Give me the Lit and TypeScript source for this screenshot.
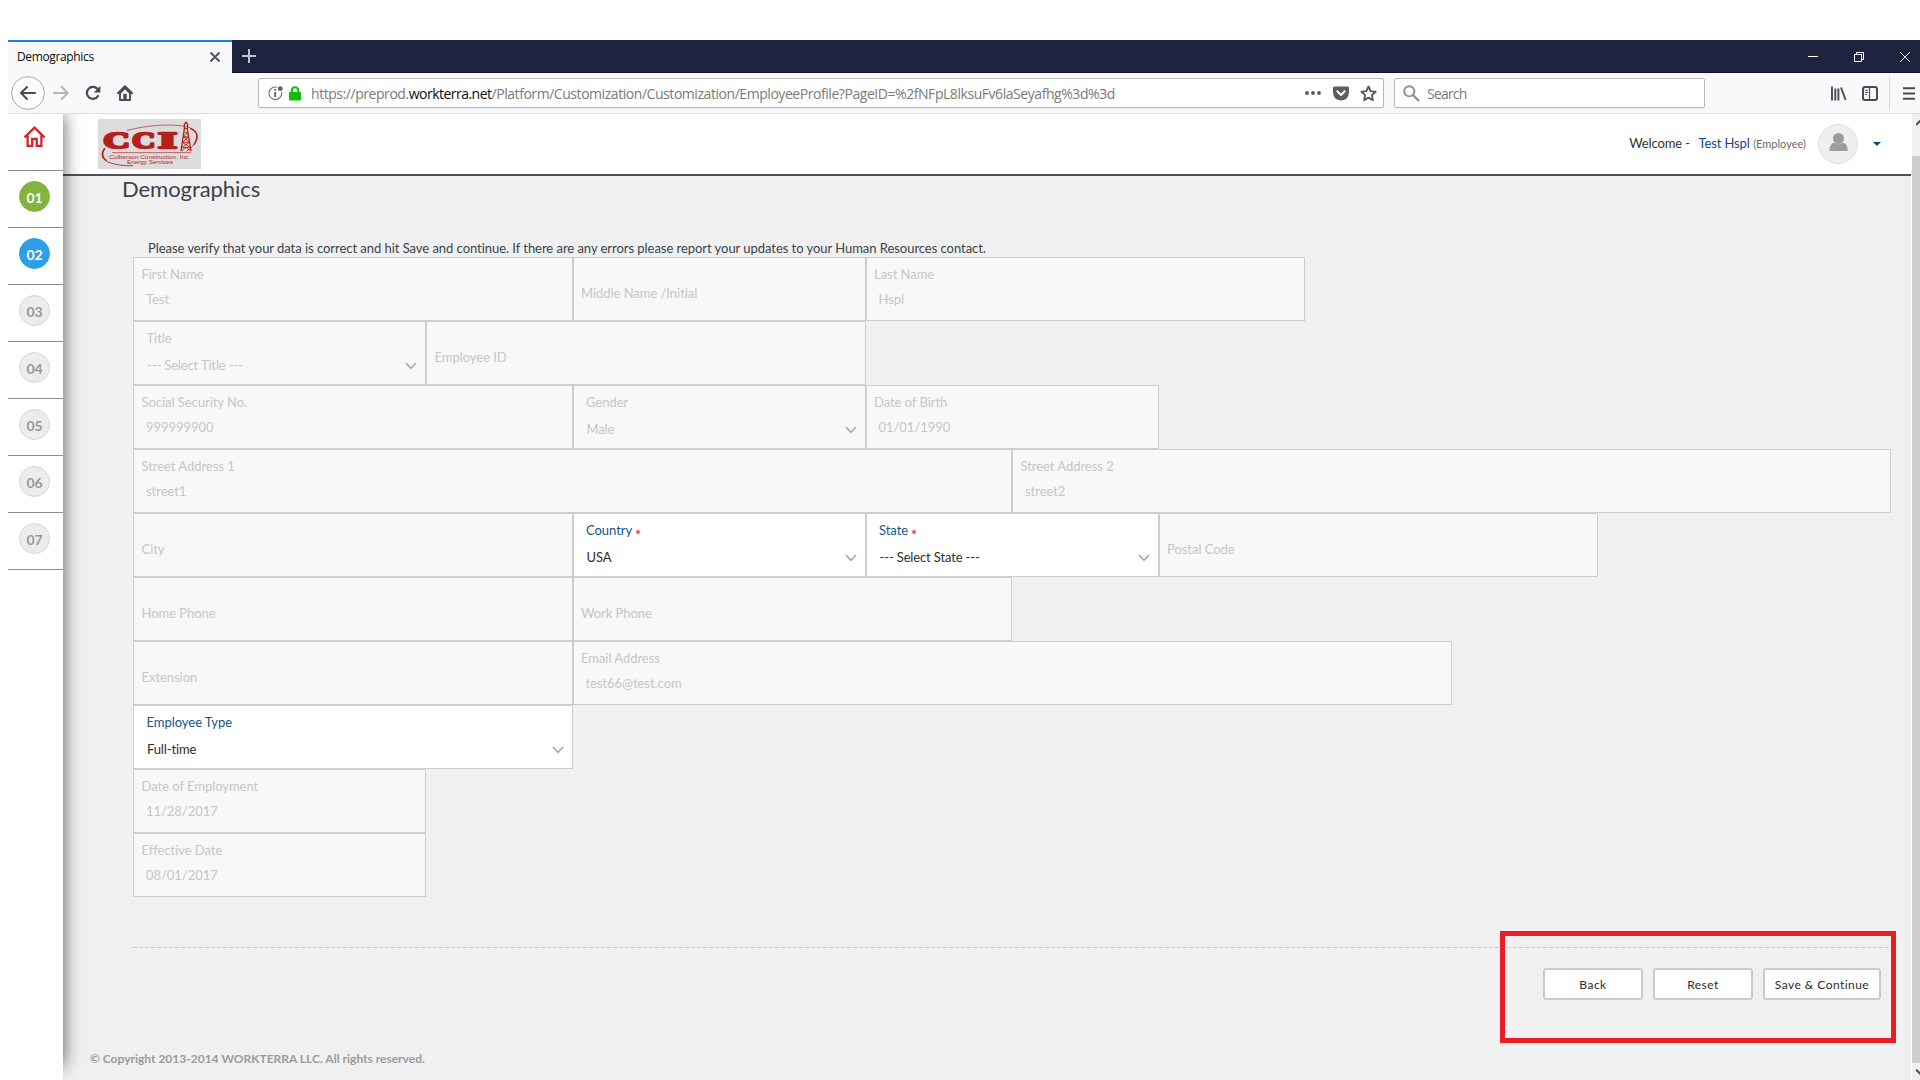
import { LitElement, html, css, nothing } from "lit";
import { customElement, property } from "lit/decorators.js";
import { classMap } from "lit/directives/class-map.js";

interface Field {
  label: string;
  value?: string;
  span: number;
  select?: boolean;
  active?: boolean;
  required?: boolean;
}

const ROWS: Field[][] = [
  [
    { label: "First Name", value: "Test", span: 3 },
    { label: "Middle Name /Initial", span: 2 },
    { label: "Last Name", value: "Hspl", span: 3 },
  ],
  [
    { label: "Title", value: "--- Select Title ---", span: 2, select: true },
    { label: "Employee ID", span: 3 },
  ],
  [
    { label: "Social Security No.", value: "999999900", span: 3 },
    { label: "Gender", value: "Male", span: 2, select: true },
    { label: "Date of Birth", value: "01/01/1990", span: 2 },
  ],
  [
    { label: "Street Address 1", value: "street1", span: 6 },
    { label: "Street Address 2", value: "street2", span: 6 },
  ],
  [
    { label: "City", span: 3 },
    { label: "Country", value: "USA", span: 2, select: true, active: true, required: true },
    { label: "State", value: "--- Select State ---", span: 2, select: true, active: true, required: true },
    { label: "Postal Code", span: 3 },
  ],
  [
    { label: "Home Phone", span: 3 },
    { label: "Work Phone", span: 3 },
  ],
  [
    { label: "Extension", span: 3 },
    { label: "Email Address", value: "test66@test.com", span: 6 },
  ],
  [{ label: "Employee Type", value: "Full-time", span: 3, select: true, active: true }],
  [{ label: "Date of Employment", value: "11/28/2017", span: 2 }],
  [{ label: "Effective Date", value: "08/01/2017", span: 2 }],
];

@customElement("form-field")
class FormField extends LitElement {
  @property({ attribute: false }) field!: Field;

  static styles = css`
    :host { display: block; min-width: 0; }
    .box {
      box-sizing: border-box; height: 64px; border: 1px solid #cdcdcd; background: #f8f8f8;
      color: #c6c6c6; padding: 8px 8px 0 7.5px; font-size: 13px; line-height: 16px;
      letter-spacing: -0.04px; white-space: nowrap;
    }
    .empty { padding-top: 27px; }
    .select { padding-left: 12.5px; }
    .active { background: #fff; color: #2e2e2e; }
    .active .label { color: #14558a; }
    .line { display: flex; justify-content: space-between; padding: 9px 0 0 4.5px; }
    .select .line { padding: 11px 0 0 0.5px; letter-spacing: -0.14px; }
    .chev { width: 12px; height: 8px; margin: 5px 0 0; }
  `;

  render() {
    const f = this.field;
    return html`<div class=${classMap({ box: true, empty: !f.value, select: !!f.select, active: !!f.active })}>
      <div class="label">${f.label}${f.required ? html` <svg width="6" height="6" viewBox="0 0 6 6"><path d="M3 .5V5.5M.8 1.7 5.2 4.3M5.2 1.7 .8 4.3" stroke="#e8262c" stroke-width=".9" /></svg>` : nothing}</div>
      ${f.value
        ? html`<div class="line"><span>${f.value}</span>${f.select
            ? html`<svg class="chev" viewBox="0 0 12 8"><path d="M1 1 6 6.3 11 1" fill="none" stroke="#a6a6a6" stroke-width="1.6" /></svg>`
            : nothing}</div>`
        : nothing}
    </div>`;
  }
}

@customElement("company-logo")
class CompanyLogo extends LitElement {
  static styles = css`
    :host { display: block; width: 103px; height: 50px; }
    svg { display: block; }
    .big { font: bold 72px "Liberation Serif", serif; }
    .small { font: 18px "Liberation Sans", sans-serif; }
  `;
  render() {
    return html`<svg width="103" height="50" viewBox="0 0 309 150">
      <rect width="309" height="150" fill="#dcdcdc" />
      <g fill="none" stroke="#b5201b" stroke-linecap="round">
        <path d="M88 34C150 18 215 14 262 22C300 30 304 54 290 74C283 84 274 92 264 97" stroke-width="2" />
        <path d="M278 29C300 38 302 56 288 76" stroke-width="4.5" />
        <path d="M20 88C8 102 10 120 30 129C52 138 80 141 104 140" stroke-width="2.5" />
        <path d="M19 90C10 102 12 116 24 124" stroke-width="5" />
        <path d="M44 101H278" stroke-width="2" />
      </g>
      <g class="big" fill="#b5201b" stroke="#b5201b" stroke-width="7" stroke-linejoin="round">
        <text x="16" y="87" textLength="80" lengthAdjust="spacingAndGlyphs">C</text>
        <text x="102" y="87" textLength="70" lengthAdjust="spacingAndGlyphs">C</text>
        <text x="180" y="87" textLength="57" lengthAdjust="spacingAndGlyphs">I</text>
      </g>
      <g fill="none" stroke="#b5201b" stroke-width="4">
        <path d="M259 30 249 96M268 30 279 96M257 28H270M259 28V16L264 10 269 16V28" />
        <path d="M259 40H269L256 54H272L253 70H275L251 86H277M269 40 272 54 256 54M256 54 275 70M253 70 277 86M251 96 264 84 278 96" stroke-width="2.6" />
      </g>
      <g class="small" fill="#b5201b">
        <text x="34" y="120" textLength="242" lengthAdjust="spacingAndGlyphs">Culberson Construction, Inc.</text>
        <text x="87" y="136" textLength="138" lengthAdjust="spacingAndGlyphs">Energy Services</text>
      </g>
    </svg>`;
  }
}

@customElement("browser-chrome")
class BrowserChrome extends LitElement {
  static styles = css`
    :host { display: block; font-family: "Open Sans", "Noto Sans", sans-serif; }
    svg { display: block; flex: none; }
    .tabs { display: flex; height: 33px; background: #20233f; }
    .tab {
      box-sizing: border-box; display: flex; align-items: center; justify-content: space-between;
      width: 224px; border-top: 2px solid #1484e6; background: #f9f9fb; padding: 0 11px 2px 9px;
      font-size: 12px; letter-spacing: -0.36px; color: #0c0c0d; line-height: 29px;
    }
    .strip { flex: 1; display: flex; justify-content: space-between; align-items: center; border-bottom: 1px solid #10122a; }
    .plus { margin-left: 10px; }
    .win { display: flex; gap: 36px; margin-right: 10px; align-items: center; margin-top: 1px; }
    .bar {
      box-sizing: border-box; display: flex; align-items: center; height: 41px; background: #f9f9fb;
      border-bottom: 1px solid #dcdcdd; padding-left: 3px;
    }
    .box {
      box-sizing: border-box; display: flex; align-items: center; height: 30px; background: #fff;
      border: 1px solid #b9b9bb; border-radius: 2px; white-space: nowrap; font-size: 14px; color: #7a7a7a;
      box-shadow: 0 1px 2px rgba(0, 0, 0, 0.06);
    }
    .url { width: 1126px; margin-left: 125px; padding: 0 6px 0 9px; }
    .addr { margin-left: 10px; letter-spacing: -0.446px; flex: 1; line-height: 28px; padding-top: 1px; }
    .addr b { font-weight: 400; color: #0c0c0d; letter-spacing: -0.52px; }
    .search { width: 311px; margin-left: 10px; padding-left: 8px; }
    .hint { margin-left: 7px; letter-spacing: -0.8px; padding-top: 1px; }
    .fwd { margin-left: 8px; } .reload { margin-left: 16px; } .home { margin-left: 16px; }
    .lock { margin-left: 6px; } .pocket { margin-left: 12px; } .star { margin-left: 11px; }
    .lib { margin-left: 126px; } .side { margin-left: 15px; }
    .div { width: 1px; height: 34px; background: #dcdcdd; margin-left: 11px; }
    .menu { margin-left: 13px; }
  `;
  render() {
    const s = "#4a4a4f";
    return html`
      <div class="tabs">
        <div class="tab"><span>Demographics</span>
          <svg width="12" height="12" viewBox="0 0 12 12"><path d="M1.5 1.5 10.5 10.5M10.5 1.5 1.5 10.5" stroke="#505055" stroke-width="1.8" /></svg>
        </div>
        <div class="strip">
          <svg class="plus" width="14" height="14" viewBox="0 0 14 14"><path d="M7 0V14M0 7H14" stroke="#c3c3cd" stroke-width="2" /></svg>
          <div class="win">
            <svg width="10" height="10" viewBox="0 0 10 10"><path d="M0 4.5H10" stroke="#fff" /></svg>
            <svg width="10" height="10" viewBox="0 0 10 10"><path d="M.5 2.5H7.5V9.5H.5ZM2.5 2.5V.5H9.5V7.5H7.5" fill="none" stroke="#fff" /></svg>
            <svg width="10" height="10" viewBox="0 0 10 10"><path d="M0 0 10 10M10 0 0 10" stroke="#fff" stroke-width=".9" /></svg>
          </div>
        </div>
      </div>
      <div class="bar">
        <svg width="34" height="34" viewBox="0 0 34 34"><circle cx="17" cy="17" r="16.4" fill="#fdfdfe" stroke="#a9a9ab" /><path d="M24 17H10.5M16 11 10 17 16 23" fill="none" stroke=${s} stroke-width="2" stroke-linecap="round" stroke-linejoin="round" /></svg>
        <svg class="fwd" width="16" height="16" viewBox="0 0 16 16"><path d="M1 8H14M8.5 1.8 14.7 8 8.5 14.2" fill="none" stroke="#b6b6b9" stroke-width="2" stroke-linecap="round" stroke-linejoin="round" /></svg>
        <svg class="reload" width="16" height="16" viewBox="0 0 16 16"><path d="M12.4 3.8A6 6 0 1 0 13 11" fill="none" stroke=${s} stroke-width="2.2" stroke-linecap="round" /><path d="M15.4 .8V7.4H8.8Z" fill=${s} /></svg>
        <svg class="home" width="16" height="16" viewBox="0 0 16 16"><path d="M1 8.2 8 1.2 15 8.2" fill="none" stroke=${s} stroke-width="2" stroke-linecap="round" stroke-linejoin="round" /><path d="M3 7.5V15H13V7.5M3 8 8 3 13 8" fill="none" stroke=${s} stroke-width="1.9" stroke-linejoin="round" /><path d="M6.3 15V8.8H9.7V15" fill=${s} /></svg>
        <div class="box url">
          <svg width="15" height="15" viewBox="0 0 15 15"><path d="M9.3 1.3A6.3 6.3 0 1 0 13.5 6" fill="none" stroke="#737373" stroke-width="1.1" /><path d="M7.2 6V11" stroke="#636363" stroke-width="1.8" /><circle cx="7.2" cy="3.8" r="1.1" fill="#636363" /><circle cx="12.3" cy="2.7" r="2.4" fill="#636363" /></svg>
          <svg class="lock" width="12" height="15" viewBox="0 0 12 15"><path d="M2.8 7V4.4A3.2 3.2 0 0 1 9.2 4.4V7" fill="none" stroke="#12bc00" stroke-width="2.1" /><rect y="6" width="12" height="8.6" rx="1" fill="#12bc00" /></svg>
          <span class="addr">https://preprod.<b>workterra.net</b>/Platform/Customization/Customization/EmployeeProfile?PageID=%2fNFpL8lksuFv6laSeyafhg%3d%3d</span>
          <svg width="16" height="4" viewBox="0 0 16 4"><g fill="#5a5a5c"><circle cx="2" cy="2" r="1.9" /><circle cx="8" cy="2" r="1.9" /><circle cx="14" cy="2" r="1.9" /></g></svg>
          <svg class="pocket" width="16" height="15" viewBox="0 0 16 15"><path d="M1.5 .5H14.5Q16 .5 16 2V6.5A8 8 0 0 1 0 6.5V2Q0 .5 1.5 .5Z" fill="#5d5d60" /><path d="M4.3 5.3 8 9 11.7 5.3" fill="none" stroke="#fff" stroke-width="2" stroke-linecap="round" stroke-linejoin="round" /></svg>
          <svg class="star" width="17" height="17" viewBox="0 0 17 17"><path d="M8.5 1.5 10.6 6.1 15.6 6.7 11.9 10.1 12.9 15.1 8.5 12.6 4.1 15.1 5.1 10.1 1.4 6.7 6.4 6.1Z" fill="none" stroke="#5a5a5c" stroke-width="1.9" stroke-linejoin="round" /></svg>
        </div>
        <div class="box search">
          <svg width="17" height="17" viewBox="0 0 17 17"><circle cx="6.3" cy="6.3" r="5.1" fill="none" stroke="#8f8f91" stroke-width="1.9" /><path d="M10 10 16 16" stroke="#8f8f91" stroke-width="2.2" /></svg>
          <span class="hint">Search</span>
        </div>
        <svg class="lib" width="16" height="15" viewBox="0 0 16 15"><path d="M1 .5V14.5M4.3 2.5V14.5M7.4 2.5V14.5M10 1.5 14.6 13.8" stroke=${s} stroke-width="1.9" /></svg>
        <svg class="side" width="16" height="15" viewBox="0 0 16 15"><rect x="1" y="1" width="14" height="13" rx="2.2" fill="none" stroke=${s} stroke-width="2" /><path d="M7.5 1V14" stroke=${s} stroke-width="1.2" /><path d="M3.2 4.3H6M3.2 6.5H6M3.2 8.5H5" stroke=${s} stroke-width="1" /></svg>
        <div class="div"></div>
        <svg class="menu" width="12" height="13" viewBox="0 0 12 13"><path d="M0 1.2H12M0 6.5H12M0 11.8H12" stroke=${s} stroke-width="2" /></svg>
      </div>`;
  }
}

@customElement("app-root")
class AppRoot extends LitElement {
  static styles = css`
    :host {
      display: flex; flex-direction: column; position: relative; box-sizing: border-box; width: 1920px;
      height: 1080px; overflow: hidden; padding: 40px 0 0 8px; background: #fff;
      font-family: Lato, "Open Sans", sans-serif; color: #333; font-size: 13px;
    }
    svg { display: block; flex: none; }
    .body { flex: 1; display: flex; min-height: 0; }
    .rail { width: 55px; flex: none; background: #fff; z-index: 1; }
    .steps { height: 952px; box-shadow: 0 0 17px rgba(0, 0, 0, 0.65); clip-path: inset(0 -30px -20px 0); background: #fff; }
    .foot { height: 20px; background: #fff; position: relative; }
    .cell { box-sizing: border-box; height: 57px; border-bottom: 1px solid #8b8b8b; padding: 10px 0 0 11px; }
    .first { padding: 12px 0 0 15px; }
    .dot {
      box-sizing: border-box; width: 31px; height: 31px; border-radius: 50%; border: 1px solid #d6d6d6;
      background: #ececec; color: #989898; font-weight: 700; font-size: 14px; line-height: 31px; text-align: center;
    }
    .done { background: #82b440; border-color: #82b440; color: #fff; }
    .now { background: #2f9ee8; border-color: #2f9ee8; color: #fff; }
    .page { width: 1848px; flex: none; display: flex; flex-direction: column; background: #f0f0f0; }
    .head {
      box-sizing: border-box; height: 62px; display: flex; align-items: center; background: #fff;
      border-bottom: 2px solid #515052; padding: 0 30px 0 35px;
    }
    .user { display: flex; align-items: center; margin-left: auto; letter-spacing: -0.12px; line-height: 16px; }
    .user span { margin-top: -2px; }
    .name { color: #0b4a80; margin-left: 8.5px; }
    .user .role { font-size: 11px; color: #6b6b6b; margin: 0 0 0 3.5px; letter-spacing: 0; }
    .avatar { margin-left: 12px; }
    .caret { margin-left: 15px; }
    h1 { margin: 0; padding: 0 0 1px 59px; font-weight: 400; font-size: 22px; line-height: 26px; color: #39434a; letter-spacing: -0.05px; }
    .intro { padding: 37px 0 0 85px; line-height: 16px; letter-spacing: -0.042px; color: #39434a; height: 17px; }
    .form { width: 1758px; margin-left: 70px; }
    .row { display: grid; grid-template-columns: repeat(12, 146.5px); height: 64px; }
    .s2 { grid-column: span 2; } .s3 { grid-column: span 3; } .s6 { grid-column: span 6; }
    .rule { height: 1px; margin: 50px 0 0 70px; width: 1758px; background: repeating-linear-gradient(90deg, #c9c9c9 0 4px, transparent 4px 6px); }
    .actions { display: flex; justify-content: flex-end; gap: 10px; padding: 20px 30px 0 0; }
    .btn {
      box-sizing: border-box; width: 100px; height: 32px; border: 2px solid #cbcbcb; border-radius: 3px;
      background: #fff; color: #2c2c2c; font: 400 12px/29px Lato, sans-serif; letter-spacing: 0.45px; padding: 0; text-align: center;
    }
    .wide { width: 118px; }
    .copy { padding: 51px 0 0 27px; font-weight: 700; font-size: 12px; line-height: 16px; color: #9b9b9b; }
    .scroll { box-sizing: border-box; flex: none; width: 9px; display: flex; flex-direction: column; border-left: 1px solid #fff; background: #f0f0f0; overflow: hidden; }
    .up { height: 42px; padding: 5px 0 0 4px; box-sizing: border-box; }
    .thumb { width: 17px; height: 907px; background: #cdcdcd; }
    .down { padding: 5px 0 0 4px; }
    .mark { position: absolute; box-sizing: border-box; left: 1500px; top: 931px; width: 396px; height: 112px; border: 5px solid #e91d25; }
  `;

  render() {
    const steps = ["01", "02", "03", "04", "05", "06", "07"];
    return html`
      <browser-chrome></browser-chrome>
      <div class="body">
        <div class="rail">
          <div class="steps">
            <div class="cell first">
              <svg width="23" height="22" viewBox="0 0 23 22"><path d="M1.5 11.3 11.5 1.6 21.5 11.3M4.6 9.5V19.8H9.2V13H13.8V19.8H18.4V9.5" fill="none" stroke="#d9232a" stroke-width="2.3" /></svg>
            </div>
            ${steps.map((n, i) => html`<div class="cell"><div class=${classMap({ dot: true, done: i === 0, now: i === 1 })}>${n}</div></div>`)}
          </div>
          <div class="foot"></div>
        </div>
        <div class="page">
          <div class="head">
            <company-logo></company-logo>
            <div class="user">
              <span>Welcome -</span><span class="name">Test Hspl</span><span class="role">(Employee)</span>
              <svg class="avatar" width="40" height="40" viewBox="0 0 40 40"><circle cx="20" cy="20" r="19.4" fill="#efefef" stroke="#dedede" /><circle cx="20.5" cy="14.5" r="5.5" fill="#9c9c9c" /><path d="M11.5 27C11.5 21.5 14 19 16.5 18.8Q20.5 21.8 24.5 18.8C27.5 19 29.8 21.5 29.8 27Z" fill="#9c9c9c" /></svg>
              <svg class="caret" width="8" height="4" viewBox="0 0 8 4"><path d="M0 0H8L4 4Z" fill="#0b4a80" /></svg>
            </div>
          </div>
          <h1>Demographics</h1>
          <div class="intro">Please verify that your data is correct and hit Save and continue. If there are any errors please report your updates to your Human Resources contact.</div>
          <div class="form">
            ${ROWS.map((r) => html`<div class="row">${r.map((f) => html`<form-field class="s${f.span}" .field=${f}></form-field>`)}</div>`)}
          </div>
          <div class="rule"></div>
          <div class="actions">
            <button class="btn">Back</button><button class="btn">Reset</button><button class="btn wide">Save &amp; Continue</button>
          </div>
          <div class="copy">© Copyright 2013-2014 WORKTERRA LLC. All rights reserved.</div>
        </div>
        <div class="scroll">
          <div class="up"><svg width="9" height="8" viewBox="0 0 9 8"><path d="M0 6 4.5 1.5 9 6" fill="none" stroke="#505050" stroke-width="2" /></svg></div>
          <div class="thumb"></div>
          <div class="down"><svg width="9" height="8" viewBox="0 0 9 8"><path d="M0 1.5 4.5 6 9 1.5" fill="none" stroke="#505050" stroke-width="2" /></svg></div>
        </div>
      </div>
      <div class="mark"></div>
    `;
  }
}
